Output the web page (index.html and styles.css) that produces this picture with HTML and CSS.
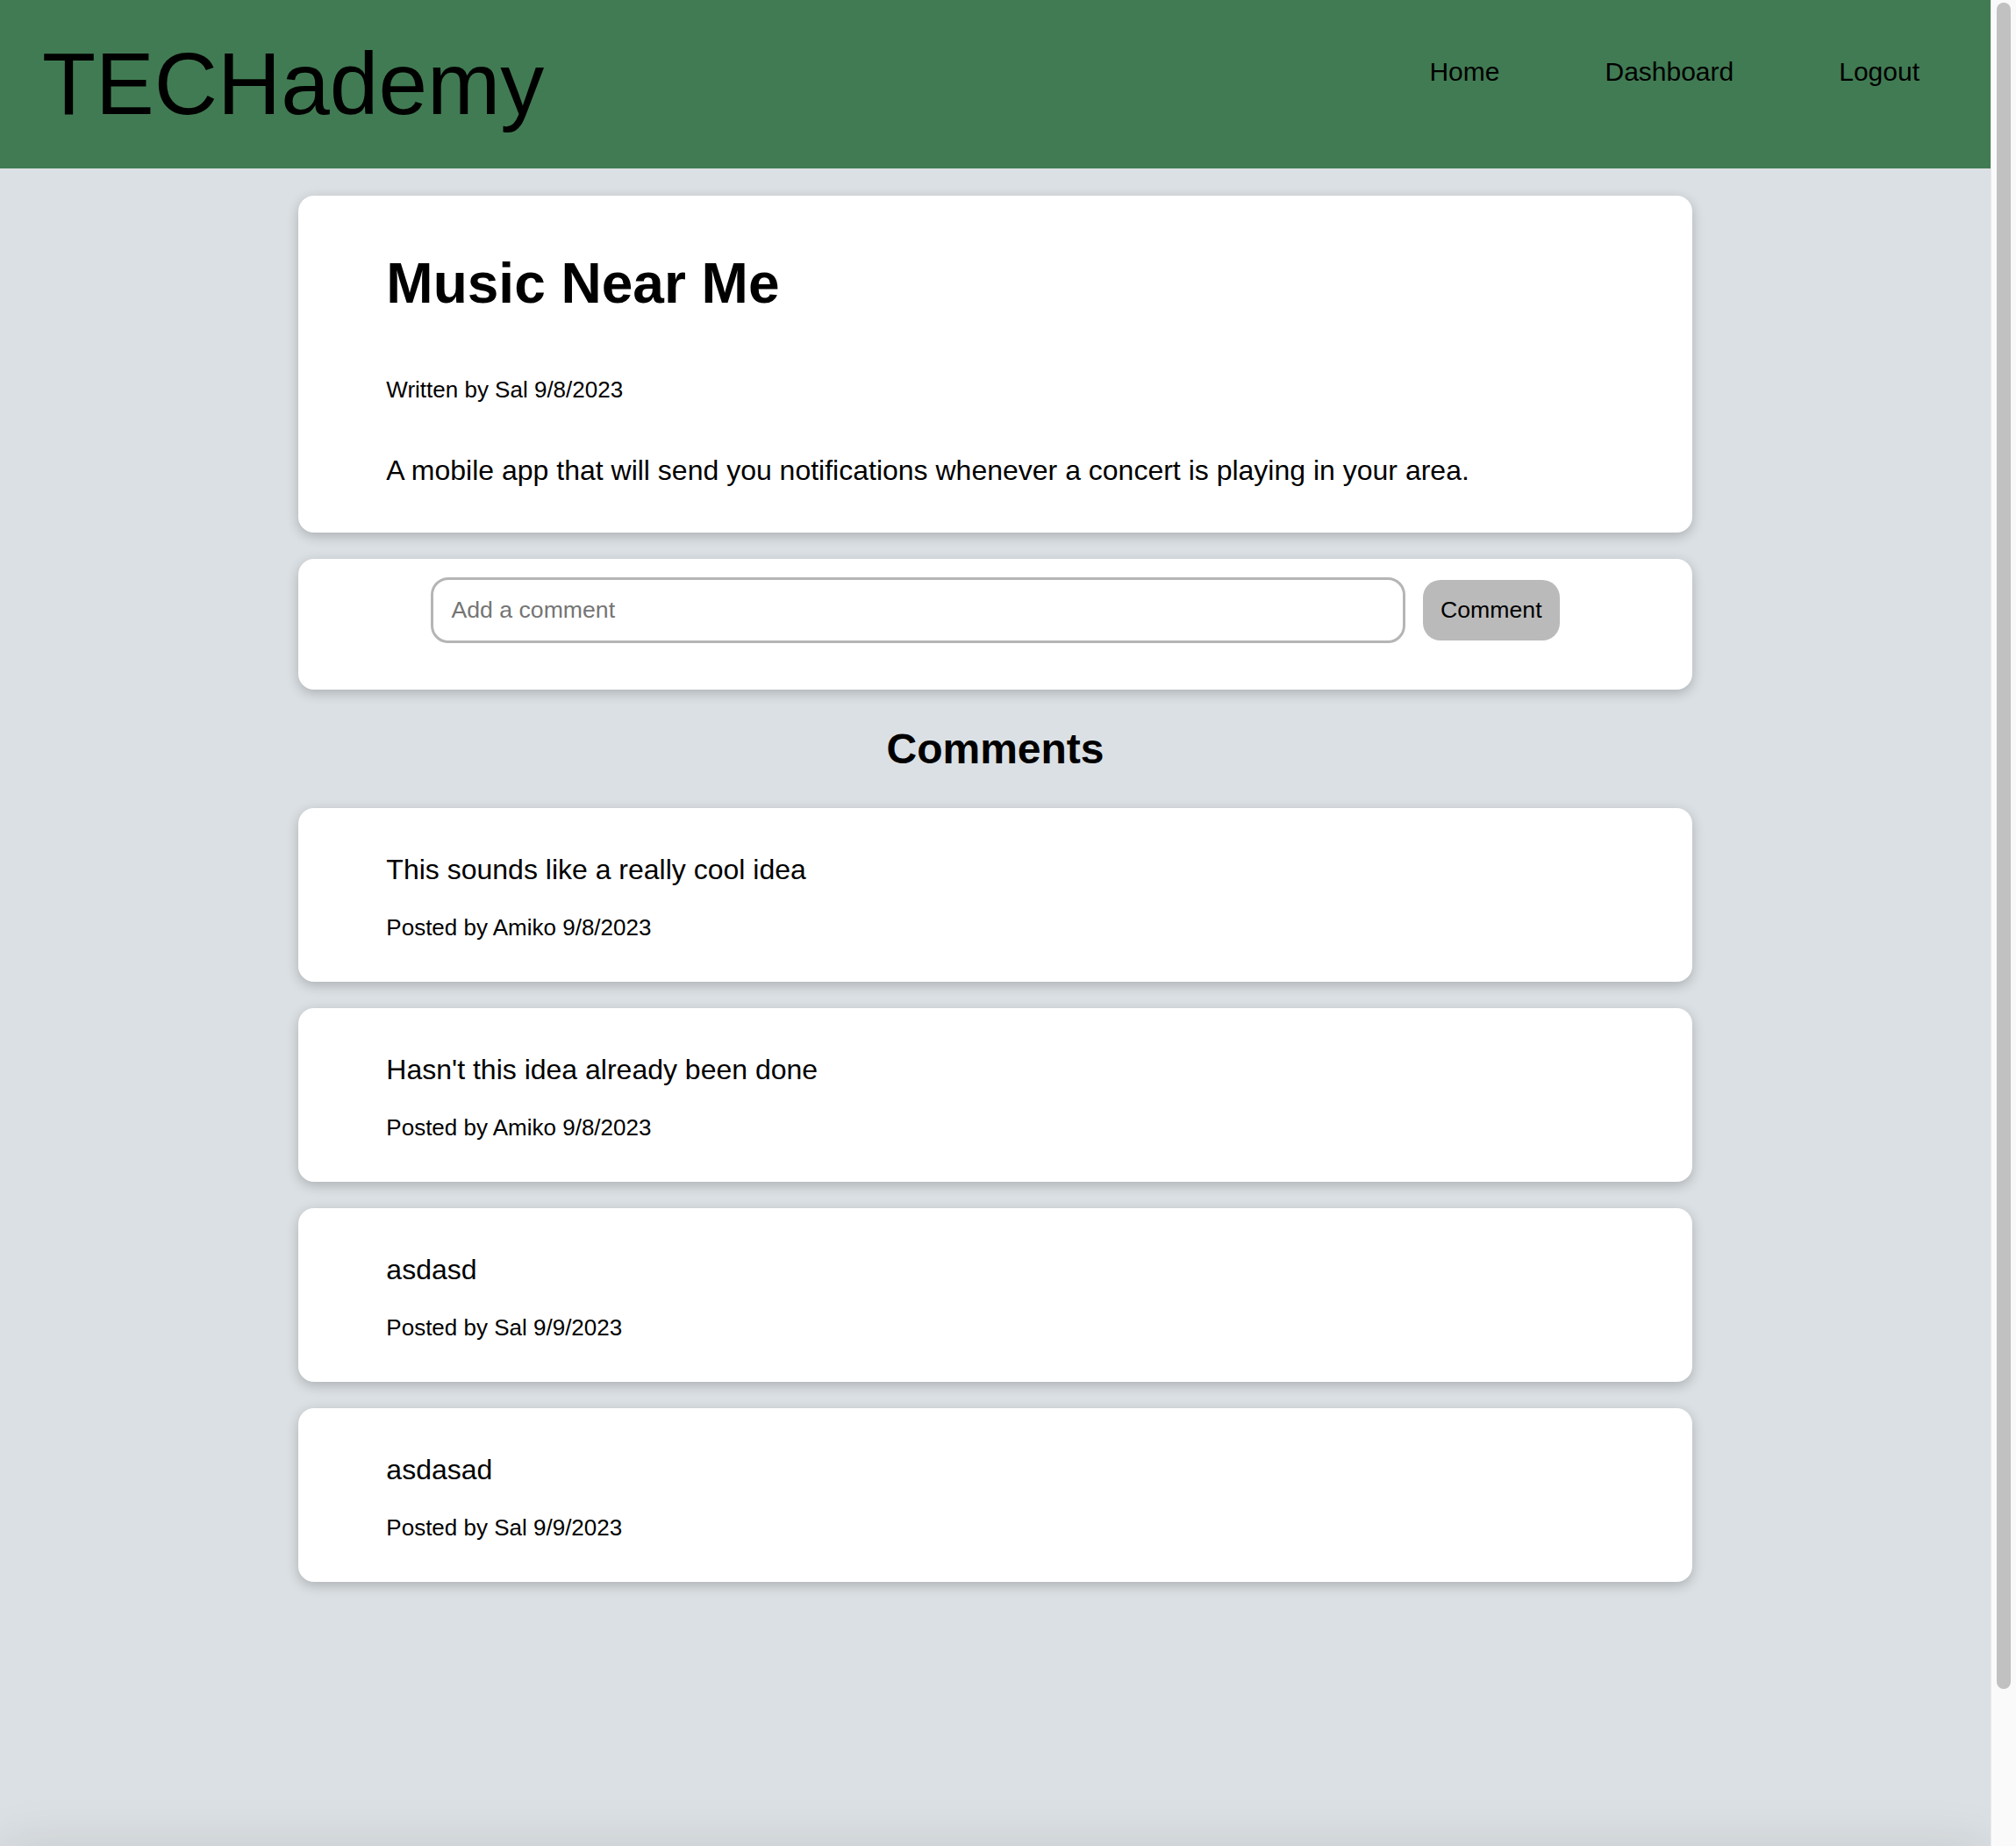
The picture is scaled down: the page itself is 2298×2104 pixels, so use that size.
FILE: index.html
```html
<!DOCTYPE html>
<html lang="en">
<head>
<meta charset="utf-8">
<title>TECHademy - Music Near Me</title>
<link rel="stylesheet" href="styles.css">
</head>
<body>
<div class="page">
  <header class="topbar">
    <h1 class="logo">TECHademy</h1>
    <nav class="nav">
      <a class="nav-link" href="#">Home</a>
      <a class="nav-link" href="#">Dashboard</a>
      <a class="nav-link" href="#">Logout</a>
    </nav>
  </header>
  <main class="main">
    <article class="card post">
      <h2 class="post-title">Music Near Me</h2>
      <p class="post-meta">Written by Sal 9/8/2023</p>
      <p class="post-body">A mobile app that will send you notifications whenever a concert is playing in your area.</p>
    </article>
    <section class="card form-card">
      <form class="comment-form">
        <input class="comment-input" type="text" placeholder="Add a comment">
        <button class="comment-btn" type="button">Comment</button>
      </form>
    </section>
    <h2 class="comments-title">Comments</h2>
    <article class="card comment">
      <p class="comment-text">This sounds like a really cool idea</p>
      <p class="comment-meta">Posted by Amiko 9/8/2023</p>
    </article>
    <article class="card comment">
      <p class="comment-text">Hasn't this idea already been done</p>
      <p class="comment-meta">Posted by Amiko 9/8/2023</p>
    </article>
    <article class="card comment">
      <p class="comment-text">asdasd</p>
      <p class="comment-meta">Posted by Sal 9/9/2023</p>
    </article>
    <article class="card comment">
      <p class="comment-text">asdasad</p>
      <p class="comment-meta">Posted by Sal 9/9/2023</p>
    </article>
  </main>
  <footer class="footer"></footer>
</div>
<div class="scrollbar" aria-hidden="true">
  <div class="scroll-thumb"></div>
</div>
</body>
</html>
```

FILE: styles.css
```css
html {
  background: #dbe0e4;
}

body {
  margin: 0;
  display: flex;
  height: 100vh;
  overflow: hidden;
  font-family: "Liberation Sans", Arial, sans-serif;
  color: #000;
  background: #dbe0e4;
}

.page {
  flex: 1;
  min-width: 0;
  overflow: hidden;
}

.scrollbar {
  width: 29px;
  flex: none;
  box-sizing: border-box;
  padding: 3px 6px 0 6px;
  background: #fafafa;
  border-left: 1px solid #ebebeb;
}

.scroll-thumb {
  height: 1922px;
  border-radius: 8px;
  background: #c1c1c1;
}

.topbar {
  display: flex;
  justify-content: space-between;
  align-items: flex-start;
  height: 192px;
  box-sizing: border-box;
  padding: 0 81px 0 48px;
  background: #417b53;
}

.logo {
  margin: 0;
  padding-top: 38px;
  font-size: 100px;
  font-weight: 400;
  line-height: 115px;
}

.nav {
  display: flex;
  gap: 120px;
  padding-top: 65px;
}

.nav-link {
  font-size: 30px;
  color: #000;
  text-decoration: none;
}

.main {
  width: 70%;
  margin: 0 auto;
  padding: 31px 0 277px;
}

.card {
  background: #fff;
  border-radius: 18px;
  box-shadow: 0 4px 14px rgba(0, 0, 0, 0.22);
  margin-bottom: 30px;
}

.post {
  display: flex;
  flex-direction: column;
  padding: 20px 100px;
}

.post-title {
  margin: 43px 0;
  font-size: 64px;
  font-weight: 700;
}

.post-meta {
  margin: 26px 0;
  font-size: 26px;
}

.post-body {
  margin: 32px 0;
  font-size: 32px;
}

.form-card {
  padding: 21px 100px 53px;
}

.comment-form {
  display: flex;
  justify-content: center;
  align-items: center;
  gap: 20px;
}

.comment-input {
  width: 80%;
  height: 75px;
  box-sizing: border-box;
  padding: 0 20px;
  border: 3px solid #b5b5b5;
  border-radius: 20px;
  font-family: "Liberation Sans", Arial, sans-serif;
  font-size: 26.67px;
  color: #000;
  background: #fff;
  outline: none;
}

.comment-input::placeholder {
  color: #757575;
}

.comment-btn {
  height: 69px;
  padding: 0 20px;
  border: none;
  border-radius: 20px;
  background: #bababa;
  font-family: "Liberation Sans", Arial, sans-serif;
  font-size: 26.67px;
  color: #000;
}

.comments-title {
  margin: 40px 0;
  text-align: center;
  font-size: 48px;
  font-weight: 700;
}

.comment {
  padding: 20px 100px;
}

.comment-text {
  margin: 32px 0;
  font-size: 32px;
}

.comment-meta {
  margin: 26px 0;
  font-size: 26px;
}

.footer {
  height: 196px;
  background: #dbe0e4;
  box-shadow: 0 0 60px rgba(0, 0, 0, 0.12);
}
```
